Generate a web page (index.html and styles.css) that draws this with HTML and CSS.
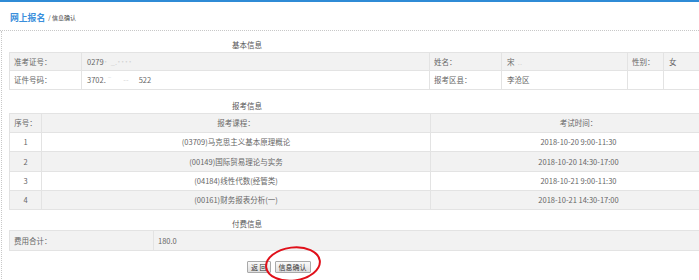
FILE: index.html
```html
<!DOCTYPE html>
<html lang="zh">
<head>
<meta charset="utf-8">
<title>信息确认</title>
<link rel="stylesheet" href="styles.css">
</head>
<body>
<div class="topbar"></div>
<div class="header">
  <span class="title">网上报名</span><span class="crumb">/ 信息确认</span>
</div>
<div class="panel">
  <div class="caption">基本信息</div>
  <table class="grid info">
    <colgroup><col class="c1"><col class="c2"><col class="c3"><col class="c4"><col class="c5"><col></colgroup>
    <tr class="odd">
      <td>准考证号：</td><td>0279<span class="blur">˙ &nbsp;_.˙˙˙˙</span></td>
      <td>姓名：</td><td>宋<span class="blur">&nbsp; ..</span></td>
      <td>性别：</td><td>女</td>
    </tr>
    <tr>
      <td>证件号码：</td><td>3702.<span class="blur">ˉ &nbsp; &nbsp; &nbsp;-- &nbsp; &nbsp; &nbsp;</span>522</td>
      <td>报考区县：</td><td>李沧区</td>
      <td></td><td></td>
    </tr>
  </table>

  <div class="caption cap2">报考信息</div>
  <table class="grid exams">
    <colgroup><col class="s1"><col class="s2"><col></colgroup>
    <tr class="odd"><td>序号：</td><td>报考课程：</td><td>考试时间：</td></tr>
    <tr><td>1</td><td>(03709)马克思主义基本原理概论</td><td>2018-10-20 9:00-11:30</td></tr>
    <tr class="odd"><td>2</td><td>(00149)国际贸易理论与实务</td><td>2018-10-20 14:30-17:00</td></tr>
    <tr><td>3</td><td>(04184)线性代数(经管类)</td><td>2018-10-21 9:00-11:30</td></tr>
    <tr class="odd"><td>4</td><td>(00161)财务报表分析(一)</td><td>2018-10-21 14:30-17:00</td></tr>
  </table>

  <div class="caption cap3">付费信息</div>
  <table class="grid fee">
    <colgroup><col class="f1"><col></colgroup>
    <tr class="odd"><td>费用合计：</td><td>180.0</td></tr>
  </table>

  <div class="actions">
    <button class="btn" type="button">返 回</button>
    <button class="btn confirm" type="button">信息确认</button>
    <svg class="mark" width="62" height="40" viewBox="0 0 62 40">
      <ellipse cx="31" cy="20" rx="27" ry="16.5" fill="none" stroke="#e0101a" stroke-width="2" transform="rotate(-7 31 20)"/>
    </svg>
  </div>
</div>
</body>
</html>
```

FILE: styles.css
```css
html, body {
  margin: 0;
  padding: 0;
  overflow: hidden;
  background: #fff;
}
body {
  width: 699px;
  height: 280px;
  font-family: "Noto Sans CJK SC", "Noto Sans", sans-serif;
  font-size: 7.5px;
  color: #666;
}
.topbar {
  height: 2px;
  background: #2f8bd6;
}
.header {
  height: 28px;
  display: flex;
  align-items: center;
  padding-left: 10px;
  border-bottom: 1px dotted #c8c8c8;
}
.title {
  font-size: 8.8px;
  font-weight: bold;
  color: #3a8fdc;
  margin-top: 2px;
}
.crumb {
  font-size: 6px;
  color: #444;
  margin-left: 3px;
  margin-top: 3px;
}
.panel {
  margin-left: 1px;
  border-left: 1px dotted #c8c8c8;
  padding-left: 7px;
  height: 260px;
}
.caption {
  padding-top: 9px;
  line-height: 10px;
  height: 10px;
  margin-bottom: 2px;
  padding-left: 223px;
  color: #555;
}
.cap2 { padding-top: 11px; margin-bottom: 2px; }
.cap3 { padding-top: 9px; margin-bottom: 1px; }
.grid {
  border-collapse: collapse;
  width: 718px;
  table-layout: fixed;
}
.grid td {
  border: 1px solid #e3e3e3;
  padding: 0 4px;
  height: 17.4px;
  line-height: 10px;
  white-space: nowrap;
  overflow: hidden;
}
.grid tr.odd td {
  background: repeating-conic-gradient(#ececec 0 25%, #f7f7f7 0 50%) 0 0 / 2px 2px;
}
.info .c1 { width: 72px; }
.info .c2 { width: 348px; }
.info .c3 { width: 72px; }
.info .c4 { width: 126px; }
.info .c5 { width: 36px; }
.info td:nth-child(2n) { padding-left: 5px; }
.exams td {
  text-align: center;
  height: 18.3px;
}
.exams .s1 { width: 32px; }
.exams .s2 { width: 389px; }
.fee td { height: 19px; }
.fee .f1 { width: 144px; }
.blur {
  color: #d4d4d4;
}
.actions {
  display: flex;
  gap: 4px;
  padding-left: 238px;
  padding-top: 10px;
  position: relative;
}
.btn {
  font-family: inherit;
  font-size: 7px;
  color: #333;
  height: 12px;
  line-height: 10px;
  padding: 0 3px;
  border: 1px solid #a9a9a9;
  border-radius: 1px;
  background: linear-gradient(#fafafa, #dedede);
  margin: 0;
}
.mark {
  position: absolute;
  left: 253px;
  top: -7px;
}
```
